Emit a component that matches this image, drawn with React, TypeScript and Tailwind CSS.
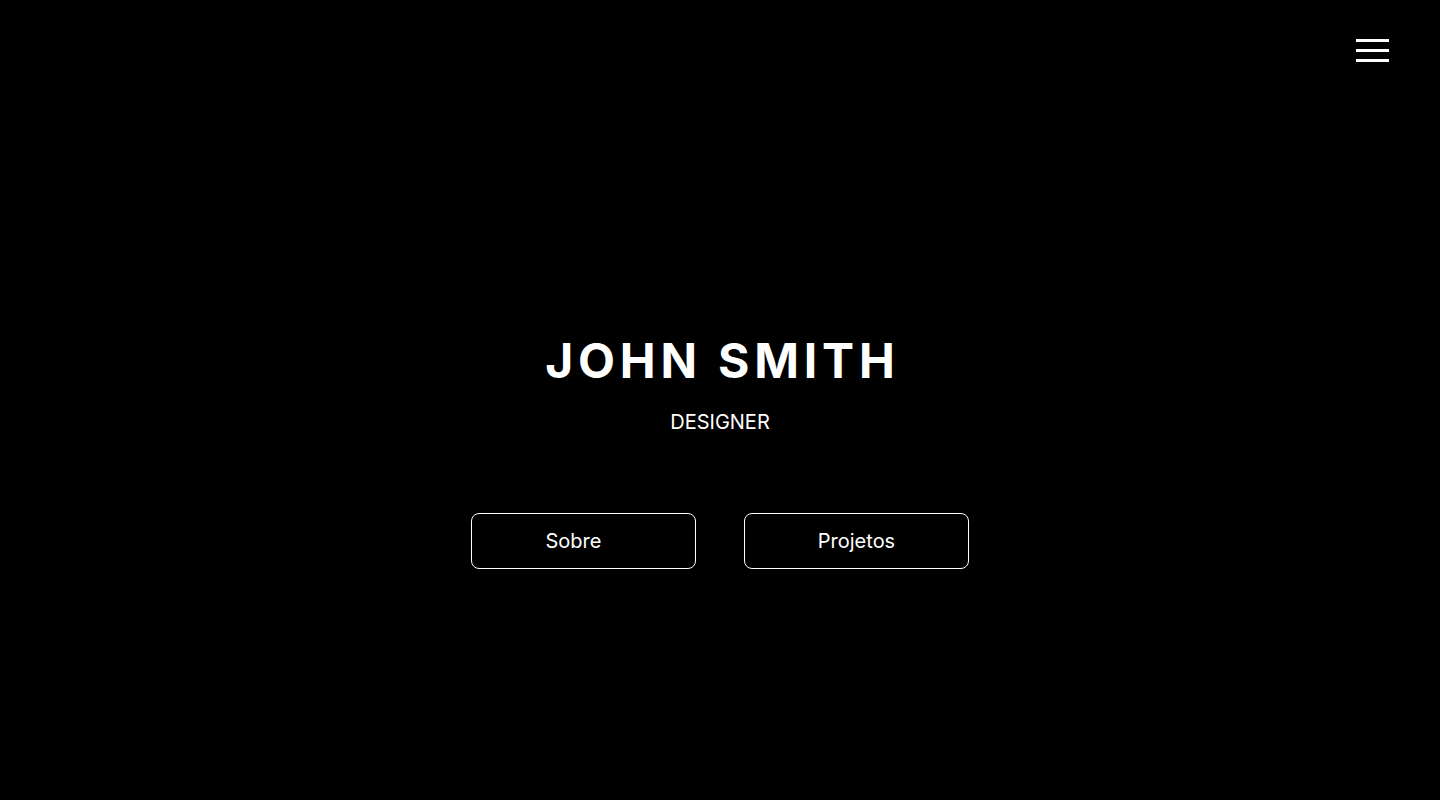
import React from 'react';

const font = { fontFamily: 'Inter, "Noto Sans", sans-serif' };

export default function App() {
  return (
    <div className="relative min-h-screen w-full bg-black text-white" style={font}>
      {/* Menu toggle */}
      <button
        aria-label="Abrir menu"
        className="absolute top-[39px] right-[51px] flex flex-col gap-[7px]"
      >
        <span className="block h-[3px] w-[33px] bg-white"></span>
        <span className="block h-[3px] w-[33px] bg-white"></span>
        <span className="block h-[3px] w-[33px] bg-white"></span>
      </button>

      {/* Hero */}
      <section className="flex flex-col items-center pt-[337px]">
        <h1 className="text-[48px] leading-[48px] font-bold tracking-[0.1em] pl-[0.1em]">JOHN SMITH</h1>
        <p className="mt-[23px] text-xl leading-7">DESIGNER</p>

        <div className="mt-[77px] flex gap-12">
          <a
            href="#sobre"
            className="flex h-14 w-[225px] items-center justify-center rounded-lg border border-white pr-5 text-xl"
          >
            Sobre
          </a>
          <a
            href="#projetos"
            className="flex h-14 w-[225px] items-center justify-center rounded-lg border border-white text-xl"
          >
            Projetos
          </a>
        </div>
      </section>
    </div>
  );
}
